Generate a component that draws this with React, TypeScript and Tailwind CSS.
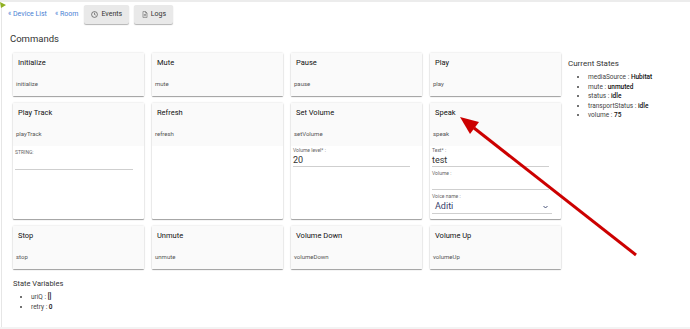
import React from "react";

const font = { fontFamily: "Roboto, 'Noto Sans', sans-serif" };

function Card({ title, sub, children }: { title: string; sub: string; children?: React.ReactNode }) {
  return (
    <div className="flex flex-col bg-white rounded-[1px] shadow-[0_1px_1px_rgba(0,0,0,0.35),0_0_2px_rgba(0,0,0,0.18)]">
      <div className="relative h-[43px] bg-[#fafafa]">
        <div className="absolute left-[5px] top-[5px] text-[7.5px] leading-[9px] font-normal text-[#111]">{title}</div>
        <div className="absolute left-[3px] top-[27px] text-[6px] leading-[8px] text-[#555]">{sub}</div>
      </div>
      {children}
    </div>
  );
}

function Label({ children }: { children: React.ReactNode }) {
  return <div className="h-[8px] text-[5px] leading-[8px] text-[#666]">{children}</div>;
}

export default function App() {
  const states: [string, string][] = [
    ["mediaSource", "Hubitat"],
    ["mute", "unmuted"],
    ["status", "idle"],
    ["transportStatus", "idle"],
    ["volume", "75"],
  ];
  return (
    <div className="relative w-[690px] h-[329px] bg-white overflow-hidden" style={font}>
      <div className="h-[2px] bg-[#ececec]" />
      <div className="ml-[1px] border-l border-[#e6e6e6] h-[323px]">
        {/* header */}
        <div className="flex items-center h-[20px] mt-[2px] pl-[6px]">
          <span className="text-[7px] text-[#4a7fd4]">« Device List</span>
          <span className="text-[7px] text-[#4a7fd4] ml-[8px]">« Room</span>
          <div className="ml-[6px] flex items-center justify-center gap-[3px] w-[45px] h-[19px] bg-[#e9e9e9] rounded-[2px] shadow-[0_1px_1px_rgba(0,0,0,0.3)] text-[7px] text-[#333]">
            <svg width="7" height="7" viewBox="0 0 24 24" fill="none" stroke="#444" strokeWidth="2.2">
              <circle cx="12" cy="12" r="10" />
              <path d="M12 6v6l4 2" />
            </svg>
            <span>Events</span>
          </div>
          <div className="ml-[5px] flex items-center justify-center gap-[3px] w-[39px] h-[19px] bg-[#e9e9e9] rounded-[2px] shadow-[0_1px_1px_rgba(0,0,0,0.3)] text-[7px] text-[#333]">
            <svg width="6" height="7" viewBox="0 0 20 24" fill="none" stroke="#666" strokeWidth="2">
              <path d="M3 2h9l5 5v15H3z" />
              <path d="M12 2v5h5M6 12h8M6 16h8" />
            </svg>
            <span>Logs</span>
          </div>
        </div>
        <div className="mt-[9px] ml-[8px] text-[9.5px] leading-[12px] text-[#333]">Commands</div>
        <div className="flex mt-[8px] ml-[11px]">
          <div className="grid grid-cols-[131px_131px_131px_131px] gap-x-[8px] gap-y-[7px]">
            <Card title="Initialize" sub="initialize" />
            <Card title="Mute" sub="mute" />
            <Card title="Pause" sub="pause" />
            <Card title="Play" sub="play" />
            <Card title="Play Track" sub="playTrack">
              <div className="h-[73px] px-[2px] pt-[2px]">
                <Label>STRING:</Label>
                <div className="h-[14px] w-[118px] border-b border-[#cfcfcf]" />
              </div>
            </Card>
            <Card title="Refresh" sub="refresh">
              <div className="h-[73px]" />
            </Card>
            <Card title="Set Volume" sub="setVolume">
              <div className="h-[73px] px-[2px]">
                <Label>Volume level* :</Label>
                <div className="h-[13px] w-[117px] border-b border-[#cfcfcf] text-[9px] leading-[13px] text-[#333]">20</div>
              </div>
            </Card>
            <Card title="Speak" sub="speak">
              <div className="h-[73px] px-[2px]">
                <Label>Text* :</Label>
                <div className="h-[13px] w-[117px] border-b border-[#cfcfcf] text-[9px] leading-[13px] text-[#333]">test</div>
                <div className="mt-[2px]">
                  <Label>Volume :</Label>
                </div>
                <div className="h-[13px] w-[117px] border-b border-[#cfcfcf]" />
                <div className="mt-[2px]">
                  <Label>Voice name :</Label>
                </div>
                <div className="flex items-center justify-between h-[14px] w-[120px] border-b border-[#cfcfcf] pl-[3px] pr-[4px]">
                  <span className="text-[9px] leading-[13px] text-[#36416b]">Aditi</span>
                  <svg width="5" height="4" viewBox="0 0 10 6" fill="none" stroke="#36416b" strokeWidth="1.8">
                    <path d="M1 1l4 4 4-4" />
                  </svg>
                </div>
              </div>
            </Card>
            <Card title="Stop" sub="stop" />
            <Card title="Unmute" sub="unmute" />
            <Card title="Volume Down" sub="volumeDown" />
            <Card title="Volume Up" sub="volumeUp" />
          </div>
          <div className="ml-[7px] pt-[6px]">
            <div className="text-[8px] leading-[10px] text-[#333]">Current States</div>
            <ul className="mt-[4px] ml-[20px] list-disc text-[6.5px] leading-[9.6px] text-[#444]">
              {states.map(([k, v]) => (
                <li key={k}>
                  {k} : <span className="font-medium text-[#111]">{v}</span>
                </li>
              ))}
            </ul>
          </div>
        </div>
        <div className="mt-[10px] ml-[11px] text-[7.5px] leading-[10px] text-[#333]">State Variables</div>
        <ul className="mt-[3px] ml-[29px] list-disc text-[6.5px] leading-[10px] text-[#444]">
          <li>
            uriQ : <span className="font-medium text-[#111]">[]</span>
          </li>
          <li>
            retry : <span className="font-medium text-[#111]">0</span>
          </li>
        </ul>
      </div>
      <div className="h-[4px] bg-[#f3f3f3]" />
      <svg className="absolute left-0 top-0 pointer-events-none" width="690" height="329" viewBox="0 0 690 329">
        <polygon points="0,2 6,5 1,8" fill="#8fb020" />
        <line x1="636" y1="255" x2="474" y2="128" stroke="#cc0000" strokeWidth="3" />
        <polygon points="460,117 479,122 470,134" fill="#cc0000" />
      </svg>
    </div>
  );
}
